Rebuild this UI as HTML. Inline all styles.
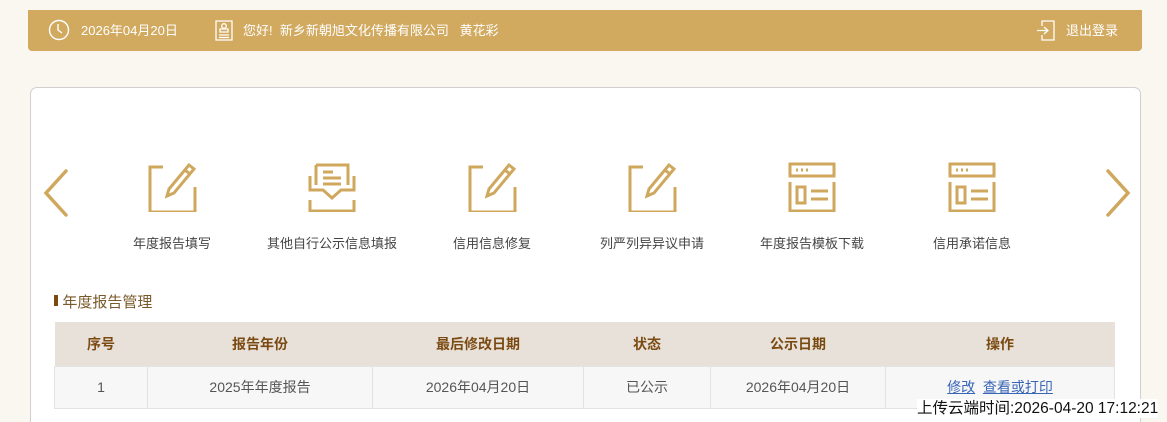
<!DOCTYPE html>
<html><head><meta charset="utf-8"><style>
*{margin:0;padding:0;box-sizing:border-box}
html,body{width:1167px;height:422px;overflow:hidden}
body{background:#faf7f0;font-family:"Liberation Sans","Noto Sans CJK SC",sans-serif;position:relative}
.hdr{position:absolute;left:28px;top:10px;width:1114px;height:41px;background:#d1a95f;border-radius:0 0 4px 4px;color:#fff;font-size:13px}
.hdr span{position:absolute;top:13px;line-height:16px}
.panel{position:absolute;left:30px;top:87px;width:1111px;height:335px;background:#fff;border:1px solid #d0d0d0;border-bottom:none;border-radius:7px 7px 0 0}
.ic{position:absolute;top:162px;width:50px;height:50px}
.lb{position:absolute;top:233px;width:200px;text-align:center;font-size:13px;color:#444}
.ttl{position:absolute;left:54px;top:291px;font-size:15px;color:#7a5a2a}
.ttl:before{content:"";position:absolute;left:0;top:4px;width:4px;height:11px;background:#7a4a10}
table{position:absolute;left:54px;top:322px;width:1061px;border-collapse:collapse;font-size:14px}
th{background:#e8e1d9;color:#7a4a12;height:44px;font-weight:bold}
td{background:#f7f7f7;height:42px;text-align:center;color:#555;border:1px solid #e3e3e3}
a{color:#3a66b8;text-decoration:underline}
.up{position:absolute;left:917px;top:399px;font-size:15.5px;color:#111;background:#fff;line-height:19px}
</style></head><body>
<div class="hdr">
<svg style="position:absolute;left:20px;top:9px" width="22" height="22" viewBox="0 0 22 22" fill="none" stroke="#fff" stroke-width="1.4"><circle cx="11" cy="11" r="9.5"/><path d="M10 5v6l4 3"/></svg>
<span style="left:53px">2026年04月20日</span>
<svg style="position:absolute;left:187px;top:10px" width="18" height="21" viewBox="0 0 18 21" fill="none" stroke="#fff" stroke-width="1.3"><path d="M1 1h16v19H1z"/><circle cx="9" cy="6" r="2.3"/><path d="M5 12h8v-3H5zM4 15h10M4 17.5h10"/></svg>
<span style="left:215px">您好!&nbsp; 新乡新朝旭文化传播有限公司 &nbsp;&nbsp;黄花彩</span>
<svg style="position:absolute;left:1008px;top:10px" width="20" height="21" viewBox="0 0 20 21" fill="none" stroke="#fff" stroke-width="1.3"><path d="M6 6V1h12v19H6v-5"/><path d="M1 10.5h10M8 7l4 3.5L8 14"/></svg>
<span style="left:1038px">退出登录</span>
</div>
<div class="panel"></div>
<svg style="position:absolute;left:42px;top:168px" width="28" height="50" viewBox="0 0 28 50" fill="none" stroke="#cfa85e" stroke-width="3.5" stroke-linecap="round"><path d="M24 3L4 25l20 22"/></svg>
<svg style="position:absolute;left:1104px;top:168px" width="28" height="50" viewBox="0 0 28 50" fill="none" stroke="#cfa85e" stroke-width="3.5" stroke-linecap="round"><path d="M4 3l20 22L4 47"/></svg>
<svg class="ic" style="left:147px" viewBox="0 0 50 50" fill="none" stroke="#cfa85e" stroke-width="3"><path d="M16 5H3v45h45V25"/><path d="M42 3l5 4-20 24-7 3 2-7z"/><path d="M38 8l5 4"/></svg>
<svg class="ic" style="left:307px" viewBox="0 0 50 50" fill="none" stroke="#cfa85e" stroke-width="3"><path d="M9 3h32v20M9 3v20"/><path d="M16 10h10M16 16h18M16 22h18"/><path d="M3 14v14h13l9 8 9-8h13V14M3 38v11h44V38"/></svg>
<svg class="ic" style="left:467px" viewBox="0 0 50 50" fill="none" stroke="#cfa85e" stroke-width="3"><path d="M16 5H3v45h45V25"/><path d="M42 3l5 4-20 24-7 3 2-7z"/><path d="M38 8l5 4"/></svg>
<svg class="ic" style="left:627px" viewBox="0 0 50 50" fill="none" stroke="#cfa85e" stroke-width="3"><path d="M16 5H3v45h45V25"/><path d="M42 3l5 4-20 24-7 3 2-7z"/><path d="M38 8l5 4"/></svg>
<svg class="ic" style="left:787px" viewBox="0 0 50 50" fill="none" stroke="#cfa85e" stroke-width="3"><path d="M3 2h44v12H3zM3 20v29h44V20"/><path d="M9 8h2M14 8h2M19 8h2"/><path d="M10 25h8v16h-8zM24 29h17M24 37h17"/></svg>
<svg class="ic" style="left:947px" viewBox="0 0 50 50" fill="none" stroke="#cfa85e" stroke-width="3"><path d="M3 2h44v12H3zM3 20v29h44V20"/><path d="M9 8h2M14 8h2M19 8h2"/><path d="M10 25h8v16h-8zM24 29h17M24 37h17"/></svg>
<div class="lb" style="left:72px">年度报告填写</div>
<div class="lb" style="left:232px">其他自行公示信息填报</div>
<div class="lb" style="left:392px">信用信息修复</div>
<div class="lb" style="left:552px">列严列异异议申请</div>
<div class="lb" style="left:712px">年度报告模板下载</div>
<div class="lb" style="left:872px">信用承诺信息</div>
<div class="ttl">&nbsp;&nbsp;年度报告管理</div>
<table><tr><th style="width:93px">序号</th><th style="width:225px">报告年份</th><th style="width:211px">最后修改日期</th><th style="width:127px">状态</th><th style="width:175px">公示日期</th><th>操作</th></tr>
<tr><td>1</td><td>2025年年度报告</td><td>2026年04月20日</td><td>已公示</td><td>2026年04月20日</td><td><a>修改</a>&nbsp; <a>查看或打印</a></td></tr></table>
<div class="up">上传云端时间:2026-04-20 17:12:21</div>
</body></html>
